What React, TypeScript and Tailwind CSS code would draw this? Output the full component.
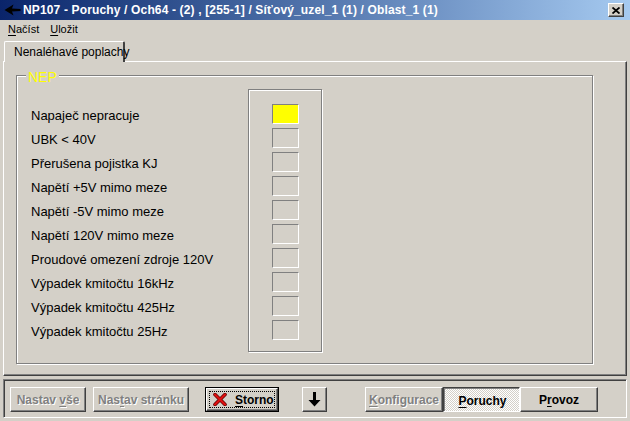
import React from 'react';

const raised =
  'border border-t-white border-l-white border-r-[#404040] border-b-[#404040] shadow-[inset_-1px_-1px_0_#808080,inset_1px_1px_0_#d4d0c8]';

const rows = [
  'Napaječ nepracuje',
  'UBK < 40V',
  'Přerušena pojistka KJ',
  'Napětí +5V mimo meze',
  'Napětí -5V mimo meze',
  'Napětí 120V mimo meze',
  'Proudové omezení zdroje 120V',
  'Výpadek kmitočtu 16kHz',
  'Výpadek kmitočtu 425Hz',
  'Výpadek kmitočtu 25Hz',
];

function U({ children }: { children: React.ReactNode }) {
  return <span className="underline underline-offset-2">{children}</span>;
}

function Disabled({ children }: { children: React.ReactNode }) {
  return <span className="text-[#808080] [text-shadow:1px_1px_0_#fff]">{children}</span>;
}

export default function App() {
  return (
    <div
      className="w-[630px] h-[421px] overflow-hidden bg-[#d4d0c8] flex flex-col text-black"
      style={{ fontFamily: '"Liberation Sans", Arial, sans-serif' }}
    >
      {/* title bar */}
      <div className="h-[20px] flex items-center bg-gradient-to-r from-[#0a246a] to-[#a6caf0] pl-[4px] pr-[6px]">
        <svg width="17" height="12" viewBox="0 0 17 12" className="shrink-0">
          <path d="M0.5 6 L9.5 0.5 L8 4.6 L16.5 5 L16.5 7 L8 7.4 L9.5 11.5 Z" fill="#000" />
        </svg>
        <span className="ml-[2px] text-white font-bold text-[12px] tracking-[0.15px] whitespace-nowrap">
          NP107 - Poruchy / Och64 - (2) , [255-1] / Síťový_uzel_1 (1) / Oblast_1 (1)
        </span>
        <div className={`ml-auto w-[16px] h-[14px] bg-[#d4d0c8] flex items-center justify-center ${raised}`}>
          <svg width="8" height="7" viewBox="0 0 8 7">
            <path d="M0.5 0.5 L7.5 6.5 M7.5 0.5 L0.5 6.5" stroke="#000" strokeWidth="1.8" />
          </svg>
        </div>
      </div>

      {/* menu */}
      <div className="h-[18px] flex items-center text-[11px] pl-[8px] gap-[11px]">
        <span>
          <U>N</U>ačíst
        </span>
        <span>
          <U>U</U>ložit
        </span>
      </div>

      {/* tabs */}
      <div className="mt-[3px] mx-[3px] flex flex-col">
        <div className="h-[20px] flex">
          <div className="ml-[1px] w-[121px] h-[21px] border-t border-l border-white border-r-2 border-r-[#404040] rounded-t-[2px] text-[12px] whitespace-nowrap flex items-center pl-[9px] relative z-10 bg-[#d4d0c8]">
            Nenaléhavé poplachy
          </div>
        </div>
        <div className="h-[315px] border border-t-white border-l-white border-r-[#404040] border-b-[#404040] shadow-[inset_-1px_-1px_0_#808080]">
          {/* group box */}
          <div className="relative ml-[12px] mt-[13px] w-[577px] h-[289px] border border-[#808080] shadow-[1px_1px_0_#fff,inset_1px_1px_0_#fff]">
            <span className="absolute left-[9px] -top-[6px] px-[2px] bg-[#d4d0c8] text-[14px] leading-[14px] text-[#ffff00]">
              NEP
            </span>
            <div className="flex">
              <div className="ml-[14px] mt-[28px] w-[217px] flex flex-col">
                {rows.map((r) => (
                  <div key={r} className="h-[24px] flex items-center text-[13px] whitespace-nowrap">
                    {r}
                  </div>
                ))}
              </div>
              <div className="mt-[13px] w-[74px] h-[263px] border border-[#808080] shadow-[1px_1px_0_#fff,inset_1px_1px_0_#fff] pl-[23px] pt-[14px] flex flex-col gap-[4px]">
                {rows.map((r, i) => (
                  <div
                    key={r}
                    className={`w-[27px] h-[20px] shrink-0 border border-t-[#808080] border-l-[#808080] border-r-white border-b-white ${
                      i === 0 ? 'bg-[#ffff00]' : ''
                    }`}
                  />
                ))}
              </div>
            </div>
          </div>
        </div>
      </div>

      {/* toolbar */}
      <div className="mt-[3px] mx-[3px] h-[39px] border border-t-[#808080] border-l-[#808080] border-r-white border-b-white shadow-[inset_1px_1px_0_#404040] flex items-start pt-[7px] pl-[6px] text-[12px] font-bold">
        <div className={`w-[76px] h-[25px] flex items-center justify-center ${raised}`}>
          <Disabled>
            Nastav <U>v</U>še
          </Disabled>
        </div>
        <div className={`ml-[7px] w-[96px] h-[25px] flex items-center justify-center ${raised}`}>
          <Disabled>
            Nas<U>t</U>av stránku
          </Disabled>
        </div>
        <div className="ml-[16px] w-[74px] h-[25px] border border-black">
          <div className={`w-full h-full flex items-center justify-center p-[2px] ${raised}`}>
            <div className="w-full h-full border border-dotted border-black flex items-center pl-[3px]">
              <svg width="14" height="13" viewBox="0 0 14 13" className="shrink-0">
                <path d="M2 1.5 L12 11.5 M12 1.5 L2 11.5" stroke="#5a0000" strokeWidth="3.6" strokeLinecap="round" />
                <path d="M2 1.5 L12 11.5 M12 1.5 L2 11.5" stroke="#e01010" strokeWidth="2.2" strokeLinecap="round" />
              </svg>
              <span className="ml-[8px]">
                <U>S</U>torno
              </span>
            </div>
          </div>
        </div>
        <div className={`ml-[23px] w-[25px] h-[25px] flex items-center justify-center ${raised}`}>
          <svg width="13" height="15" viewBox="0 0 13 15">
            <path d="M5 0 H8 V8 H12.5 L6.5 14.5 L0.5 8 H5 Z" fill="#000" />
          </svg>
        </div>
        <div className={`ml-[38px] w-[78px] h-[25px] flex items-center justify-center ${raised}`}>
          <Disabled>
            <U>K</U>onfigurace
          </Disabled>
        </div>
        <div className="w-[77px] h-[25px] flex items-center justify-center border border-t-[#404040] border-l-[#404040] border-r-white border-b-white shadow-[inset_1px_1px_0_#808080] bg-[repeating-conic-gradient(#ffffff_0_25%,#d4d0c8_0_50%)] bg-[length:2px_2px]">
          <span className="pt-[2px] pl-[2px]">
            <U>P</U>oruchy
          </span>
        </div>
        <div className={`w-[78px] h-[25px] flex items-center justify-center ${raised}`}>
          <span>
            P<U>r</U>ovoz
          </span>
        </div>
      </div>
    </div>
  );
}
